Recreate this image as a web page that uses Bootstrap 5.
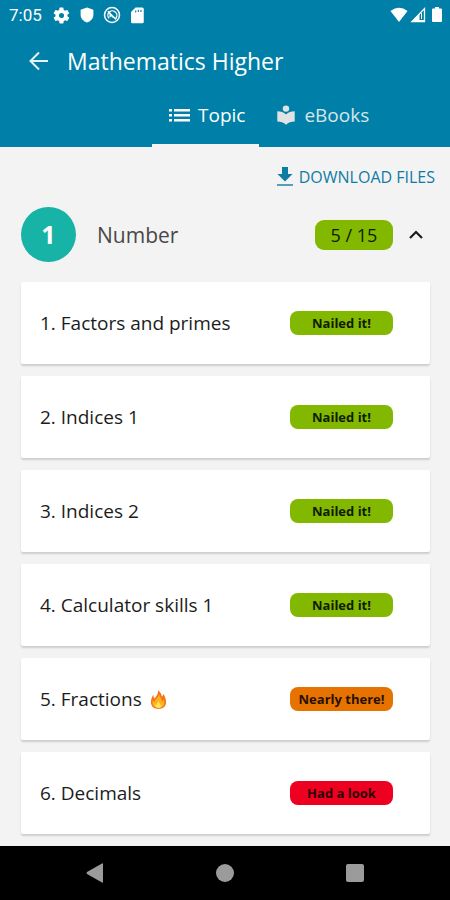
<!DOCTYPE html>
<html lang="en">
<head>
<meta charset="utf-8">
<meta name="viewport" content="width=device-width, initial-scale=1">
<title>Mathematics Higher</title>
<link href="https://cdn.jsdelivr.net/npm/bootstrap@5.3.0/dist/css/bootstrap.min.css" rel="stylesheet">
<style>
body { font-family: "Open Sans", "Noto Sans", sans-serif; background: #f3f3f3; color: #1c1c1c; }
svg { display: block; flex: none; }
button, a { color: inherit; }
.app-head { background: #0080a8; color: #fff; }
.status-line { height: 30px; padding: 0 6px 0 9px; font: 400 17px/30px Roboto, sans-serif; }
.status-icons { gap: 7px; margin-left: 10px; }
.signal-icons { gap: 2px; }
.title-line { height: 62px; padding-left: 27px; gap: 16px; }
.title-line h1 { font-size: 23px; line-height: 32px; font-weight: 500; }
.tab-line { height: 55px; padding-left: 152px; }
.tab-line .nav-link { padding: 0 14px 6px 16px; border-radius: 0; border-bottom: 3px solid transparent; color: #d9e4e8; font-size: 19px; gap: 7px; font-weight: 500; }
.tab-line .nav-link.active { color: #fff; border-color: #f3f3f3; }
.files-line { padding: 14px 15px 0; }
.files-link { color: #0f7ca3; font-size: 16px; line-height: 32px; gap: 4px; }
.topic-head { padding: 14px 25px 20px 21px; }
.topic-number { width: 55px; height: 55px; background: #16b3a6; color: #fff; font-size: 25px; }
.topic-name { font-size: 21px; line-height: 32px; margin-left: 21px; color: #484848; }
.topic-score { width: 78px; line-height: 30px; border-radius: 9px; font-size: 18px; font-weight: 500; margin-right: 14px; }
.level-green { background: #82b900; color: #101c00; }
.level-orange { background: #e67300; color: #261000; }
.level-red { background: #ee0020; color: #300006; }
.lesson-list { padding: 0 20px 12px 21px; gap: 12px; }
.lesson { height: 82px; border-radius: 2px; background: #fff; padding: 0 37px 0 19px; box-shadow: 0 2px 2px #00000028; font-size: 19px; }
.lesson-level { width: 103px; line-height: 24px; border-radius: 8px; font-size: 13px; font-weight: 700; }
.system-line { height: 54px; padding: 0 30px; background: #000; }
</style>
<script src="https://cdn.jsdelivr.net/npm/bootstrap@5.3.0/dist/js/bootstrap.bundle.min.js" defer></script>
</head>
<body class="min-vh-100 d-flex flex-column">
<header class="app-head">
  <div class="status-line d-flex align-items-center">
    <span>7:05</span>
    <div class="status-icons d-flex align-items-center">
      <svg width="19" height="19" viewBox="0 0 24 24" fill="#fff"><path d="M19.4 13a7.500 7.500 0 0 0 0-2l2.100-1.600a.5.5 0 0 0 .1-.7l-2-3.400a.5.5 0 0 0-.6-.2l-2.500 1a7.300 7.300 0 0 0-1.700-1l-.4-2.600a.5.5 0 0 0-.5-.5h-4a.5.5 0 0 0-.5.500L9 5.100a7.700 7.700 0 0 0-1.700 1l-2.500-1a.5.5 0 0 0-.6.200l-2 3.400a.5.5 0 0 0 .1.700L4.500 11a7.500 7.500 0 0 0 0 2l-2.200 1.600a.5.5 0 0 0-.1.700l2 3.400c.1.200.4.300.6.200l2.500-1c.5.400 1.100.7 1.700 1l.4 2.600c0 .3.300.5.500.5h4c.3 0 .5-.2.500-.5l.4-2.600c.6-.3 1.200-.6 1.700-1l2.500 1c.2.100.5 0 .6-.2l2-3.400a.5.5 0 0 0-.1-.7zM12 15.200a3.200 3.200 0 1 1 0-6.400 3.200 3.200 0 0 1 0 6.400z"/></svg>
      <svg width="18" height="18" viewBox="0 0 24 24" fill="#fff"><path d="M12 2 3.500 5v7c0 5 4 8.500 8.500 10 4.500-1.500 8.500-5 8.500-10V5z"/></svg>
      <svg width="18" height="18" viewBox="0 0 24 24" fill="none" stroke="#fff"><circle cx="12" cy="12" r="10" stroke-width="2"/><path d="M8 16.500a6 6 0 1 1 8.500.5M6.500 7l11 11M9.500 15v-4l4 4" stroke-width="1.800"/></svg>
      <svg width="18" height="18" viewBox="0 0 24 24" fill="#fff"><path fill-rule="evenodd" d="M10 2h9a2 2 0 0 1 2 2v17a2 2 0 0 1-2 2H6a2 2 0 0 1-2-2V8zM9.500 6v2.500H11V6zm3.500-1v3h1.500V5zm3.500 0v3H18V5z"/></svg>
    </div>
    <div class="signal-icons d-flex align-items-center ms-auto">
      <svg width="18" height="18" viewBox="0 0 18 18" fill="#fff"><path d="M.5 5Q9-1.500 17.500 5L9 16z"/></svg>
      <svg width="18" height="18" viewBox="0 0 18 18"><path d="M14.500 2.500v13H2z" fill="none" stroke="#fff" stroke-width="1.300"/><path d="M1 16 9.500 7.500V16z" fill="#fff"/><path d="M9 14.500h5M11.500 7v6" stroke="#fff"/></svg>
      <svg width="14" height="18" viewBox="0 0 14 18" fill="#fff"><path d="M5 1h4v1.500h2q1 0 1 1V15q0 1-1 1H3q-1 0-1-1V3.500q0-1 1-1h2z"/></svg>
    </div>
  </div>
  <div class="title-line d-flex align-items-center">
    <button type="button" class="btn p-0 border-0" aria-label="Back"><svg width="24" height="24" viewBox="0 0 24 24" fill="none" stroke="#e4f3f6" stroke-width="2"><path d="M21 12H4M12 3.500 3.500 12l8.500 8.500"/></svg></button>
    <h1 class="m-0">Mathematics Higher</h1>
  </div>
  <nav class="tab-line nav flex-nowrap" aria-label="Sections">
    <a href="#topic" class="nav-link active d-flex align-items-center" aria-current="page"><svg width="23" height="20" viewBox="0 0 23 20" fill="#fff"><path d="M1 4h3v2.500H1zm5 0h16v2.500H6zM1 9h3v2.500H1zm5 0h16v2.500H6zm-5 5h3v2.500H1zm5 0h16v2.500H6z"/></svg>Topic</a>
    <a href="#ebooks" class="nav-link d-flex align-items-center"><svg width="22" height="22" viewBox="0 0 24 24" fill="#e0e2e3"><circle cx="12" cy="5" r="3.500"/><path d="M12 11.500C9.500 9.300 6.200 8 2.500 8v11c3.700 0 7 1.300 9.500 3.500 2.500-2.200 5.800-3.500 9.500-3.500V8c-3.700 0-7 1.300-9.500 3.500z"/></svg>eBooks</a>
  </nav>
</header>
<main class="flex-grow-1" id="topic">
  <div class="files-line d-flex justify-content-end">
    <a href="#files" class="files-link d-flex align-items-center text-decoration-none"><svg width="20" height="22" viewBox="0 0 20 22" fill="#0f7ca3"><path d="M7 1h6v7h4.500L10 15.500 2.500 8H7z"/><path d="M2 18h16v2H2z" opacity=".7"/></svg>DOWNLOAD FILES</a>
  </div>
  <div class="topic-head d-flex align-items-center">
    <span class="topic-number rounded-circle d-flex align-items-center justify-content-center fw-bold">1</span>
    <h2 class="topic-name mb-0 fw-normal">Number</h2>
    <span class="topic-score level-green text-center ms-auto">5 / 15</span>
    <button type="button" class="btn p-0 border-0" aria-label="Collapse"><svg width="18" height="18" viewBox="0 0 18 18" fill="none" stroke="#1c1c1c" stroke-width="2.200"><path d="m3 12 6-6 6 6"/></svg></button>
  </div>
  <ul class="lesson-list list-unstyled mb-0 d-flex flex-column">
    <li class="lesson d-flex align-items-center justify-content-between"><span>1. Factors and primes</span><span class="lesson-level level-green text-center">Nailed it!</span></li>
    <li class="lesson d-flex align-items-center justify-content-between"><span>2. Indices 1</span><span class="lesson-level level-green text-center">Nailed it!</span></li>
    <li class="lesson d-flex align-items-center justify-content-between"><span>3. Indices 2</span><span class="lesson-level level-green text-center">Nailed it!</span></li>
    <li class="lesson d-flex align-items-center justify-content-between"><span>4. Calculator skills 1</span><span class="lesson-level level-green text-center">Nailed it!</span></li>
    <li class="lesson d-flex align-items-center justify-content-between"><span class="d-flex align-items-center gap-2">5. Fractions <svg width="17" height="21" viewBox="0 0 18 22"><path d="M8.500 1c2 2 4 4 4 7 1-.6 1.500-1.500 1.500-3 2 3 3 6 3 9 0 4.500-3.500 7-8 7s-8-2.500-8-7c0-3 1-5.500 2.500-8 .2 2 .5 3 1.500 4 2-3 4-5 3.500-9z" fill="#f4741d"/><path d="M9.500 5c.6 4 3 4.500 3 8 1-.4 1.500-1 2-2 2 5-.5 9-5.500 9s-7.500-4-6-8.500c.5 1 1 1.700 2 2.200C5 10.500 9.500 9 9.500 5z" fill="#ffb21c"/><path d="M9 12c0 2 2 2.500 2 5 .6-.2 1-.6 1.400-1 .2 2.500-1.200 4-3.400 4s-4-1.500-3.600-4c.5.500.8.800 1.400 1C6.700 15 9 14.500 9 12z" fill="#ffe45c"/></svg></span><span class="lesson-level level-orange text-center">Nearly there!</span></li>
    <li class="lesson d-flex align-items-center justify-content-between"><span>6. Decimals</span><span class="lesson-level level-red text-center">Had a look</span></li>
  </ul>
</main>
<footer class="system-line d-flex align-items-center justify-content-around">
  <button type="button" class="btn p-0 border-0" aria-label="System back"><svg width="20" height="20" viewBox="0 0 20 20" fill="#9b9b9b"><path d="M18 1v18q0 1-1 .5L2 11q-1-1 0-2L17 .5q1-.5 1 .5z"/></svg></button>
  <button type="button" class="btn p-0 border-0" aria-label="Home"><svg width="20" height="20" viewBox="0 0 20 20" fill="#9b9b9b"><circle cx="10" cy="10" r="9"/></svg></button>
  <button type="button" class="btn p-0 border-0" aria-label="Recent apps"><svg width="20" height="20" viewBox="0 0 20 20" fill="#9b9b9b"><rect x="1" y="1" width="18" height="18" rx="2"/></svg></button>
</footer>
</body>
</html>
